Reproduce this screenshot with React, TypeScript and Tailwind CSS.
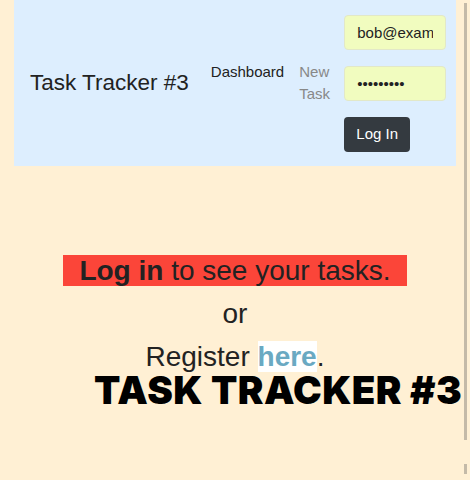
import React from "react";

const sans = { fontFamily: '"Liberation Sans", Arial, sans-serif' };

function NavBar() {
  return (
    <nav className="ml-[14px] flex h-[166px] w-[442px] items-center bg-[#ddeefe]" style={sans}>
      <h1 className="ml-4 text-[22.5px] text-[#222]">Task Tracker #3</h1>
      <div className="ml-[22px] flex items-start gap-[15px] self-center text-[15px] leading-[22px]">
        <a className="text-[#222]">Dashboard</a>
        <a className="w-[32px] text-[#888]">New Task</a>
      </div>
      <form className="ml-[13px] flex flex-col gap-[16px]">
        <input
          readOnly
          value="bob@exam"
          className="h-[35px] w-[102px] rounded-[4px] border border-[#e2e8c8] bg-[#f1fcbf] px-3 text-[15px] text-[#222] outline-none"
        />
        <input
          readOnly
          type="password"
          value="password1"
          className="h-[35px] w-[102px] rounded-[4px] border border-[#e2e8c8] bg-[#f1fcbf] px-3 text-[15px] text-[#222] outline-none"
        />
        <button
          type="button"
          className="h-[35px] w-[66px] rounded-[4px] bg-[#343a40] text-[15px] text-white"
        >
          Log In
        </button>
      </form>
    </nav>
  );
}

export default function App() {
  return (
    <div className="relative h-[480px] w-[470px] overflow-hidden bg-[#fff0d4]">
      <NavBar />
      <main className="flex flex-col items-center pt-[89px]" style={sans}>
        <p className="bg-[#fb4539] px-[16px] text-[28px] leading-[31px] text-[#222]">
          <strong>Log in</strong> to see your tasks.
        </p>
        <p className="mt-[12px] text-[28px] leading-[31px] text-[#222]">or</p>
        <p className="mt-[12px] text-[28px] leading-[31px] text-[#222]">
          Register <a className="bg-white font-bold text-[#6aa9c2]">here</a>.
        </p>
      </main>
      <div
        className="ml-[94px] mt-[1px] whitespace-nowrap text-[38.5px] font-black leading-[34px] tracking-[0.4px] text-black"
        style={{ fontFamily: "Inter, sans-serif" }}
      >
        TASK TRACKER #3
      </div>
      <div className="absolute right-[3px] top-[3px] h-[437px] w-[3px] bg-[#c4baa8]" />
      <div className="absolute right-[3px] top-[464px] h-[10px] w-[3px] bg-[#c4baa8]" />
    </div>
  );
}
